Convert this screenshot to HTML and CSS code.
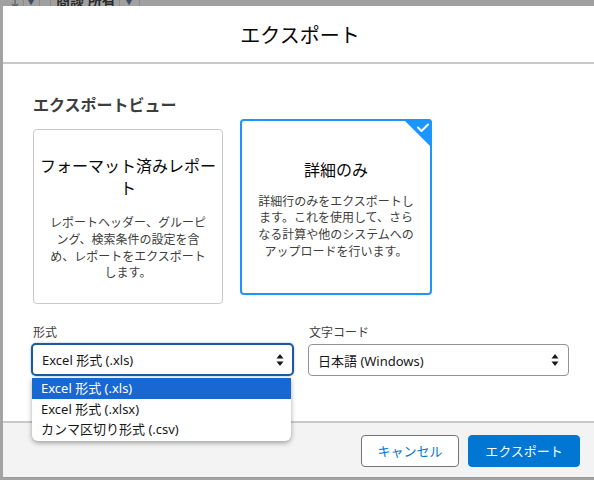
FILE: index.html
```html
<!DOCTYPE html>
<html lang="ja">
<head>
<meta charset="utf-8">
<title>エクスポート</title>
<link rel="stylesheet" href="styles.css">
</head>
<body>
<div class="page-strip">
  <div class="strip-row">
    <span class="strip-cell strip-a">↓</span>
    <span class="strip-cell strip-b">▼</span>
    <span class="strip-cell strip-c">商談 所有者</span>
    <span class="strip-cell strip-d">▼</span>
  </div>
</div>
<div class="modal">
  <header class="modal-header">
    <h2 class="modal-title">エクスポート</h2>
  </header>
  <section class="modal-body">
    <h3 class="section-title">エクスポートビュー</h3>
    <div class="cards">
      <div class="card card-formatted">
        <div class="card-title">フォーマット済みレポート</div>
        <div class="card-desc">レポートヘッダー、グルーピング、検索条件の設定を含め、レポートをエクスポートします。</div>
      </div>
      <div class="card card-selected">
        <svg class="card-check" width="29" height="29" viewBox="0 0 29 29">
          <polygon points="0,0 29,0 29,29" fill="#1b96ff"/>
          <polyline points="15,8.5 18.5,12 25,5.5" fill="none" stroke="#fff" stroke-width="2" stroke-linecap="round" stroke-linejoin="round"/>
        </svg>
        <div class="card-title">詳細のみ</div>
        <div class="card-desc">詳細行のみをエクスポートします。これを使用して、さらなる計算や他のシステムへのアップロードを行います。</div>
      </div>
    </div>
    <div class="form-row">
      <div class="field">
        <label class="field-label">形式</label>
        <div class="select select-focus">
          <span class="select-value">Excel 形式 (.xls)</span>
          <svg class="select-arrows" width="8" height="14" viewBox="0 0 8 14">
            <polygon points="4,1 7.5,5.5 0.5,5.5" fill="#181818"/>
            <polygon points="4,13 7.5,8.5 0.5,8.5" fill="#181818"/>
          </svg>
        </div>
        <ul class="dropdown">
          <li class="option option-active">Excel 形式 (.xls)</li>
          <li class="option">Excel 形式 (.xlsx)</li>
          <li class="option">カンマ区切り形式 (.csv)</li>
        </ul>
      </div>
      <div class="field">
        <label class="field-label">文字コード</label>
        <div class="select">
          <span class="select-value">日本語 (Windows)</span>
          <svg class="select-arrows" width="8" height="14" viewBox="0 0 8 14">
            <polygon points="4,1 7.5,5.5 0.5,5.5" fill="#181818"/>
            <polygon points="4,13 7.5,8.5 0.5,8.5" fill="#181818"/>
          </svg>
        </div>
      </div>
    </div>
  </section>
  <footer class="modal-footer">
    <button class="btn btn-neutral">キャンセル</button>
    <button class="btn btn-brand">エクスポート</button>
  </footer>
</div>
</body>
</html>
```

FILE: styles.css
```css
* { box-sizing: border-box; }

html, body {
  margin: 0;
  padding: 0;
}

body {
  width: 594px;
  height: 480px;
  overflow: hidden;
  background: #a3a3a3;
  font-family: "Noto Sans", "Noto Sans CJK JP", sans-serif;
  color: #181818;
}

.page-strip {
  height: 6px;
  overflow: hidden;
  background: #a0a0a0;
}

.strip-row {
  display: flex;
  margin-top: -9px;
  height: 20px;
  font-size: 14px;
  line-height: 20px;
  color: #2a2a2a;
}

.strip-cell {
  border-right: 1px solid #8a8a8a;
}

.strip-a { width: 24px; padding-left: 8px; color: #555; }
.strip-b { width: 16px; padding-left: 2px; color: #3f4d63; font-size: 10px; }
.strip-c { width: 70px; padding-left: 5px; margin-left: 10px; border-left: 1px solid #8a8a8a; font-weight: bold; }
.strip-d { width: 20px; padding-left: 4px; color: #3f4d63; font-size: 10px; }

.modal {
  margin-left: 3px;
  width: 594px;
  background: #fff;
}

.modal-header {
  height: 58px;
  display: flex;
  align-items: center;
  justify-content: center;
  border-bottom: 2px solid #c9c9c9;
  padding-top: 4px;
}

.modal-title {
  margin: 0;
  font-size: 20px;
  font-weight: normal;
  line-height: 24px;
  color: #080707;
}

.modal-body {
  height: 357px;
  padding: 30px 28px 0 29px;
}

.section-title {
  margin: 0;
  font-size: 16px;
  font-weight: bold;
  line-height: 20px;
  color: #3e3e3c;
  padding-left: 1px;
  padding-top: 1px;
}

.cards {
  display: flex;
  align-items: flex-start;
  gap: 17px;
  margin-top: 4px;
  height: 185px;
}

.card {
  position: relative;
  display: flex;
  flex-direction: column;
  justify-content: center;
  align-items: center;
  text-align: center;
  border-radius: 4px;
  padding: 4px 4px 0;
}

.card-formatted {
  width: 190px;
  height: 175px;
  margin-top: 10px;
  margin-left: 1px;
  border: 1px solid #c9c9c9;
}

.card-selected {
  width: 192px;
  height: 176px;
  border: 2px solid #1b96ff;
  padding: 5px 3px 0;
}

.card-check {
  position: absolute;
  top: -2px;
  right: -2px;
  border-top-right-radius: 4px;
}

.card-title {
  font-size: 16px;
  line-height: 22px;
  color: #080707;
}

.card-desc {
  width: 158px;
  font-size: 12px;
  line-height: 16.7px;
  color: #3e3e3c;
}

.card-formatted .card-desc {
  margin-top: 16px;
}

.card-selected .card-desc {
  margin-top: 13px;
}

.form-row {
  display: flex;
  gap: 15px;
  margin-top: 21px;
}

.field {
  position: relative;
  width: 261px;
}

.field-label {
  display: block;
  font-size: 12px;
  line-height: 16px;
  color: #3e3e3c;
  margin-bottom: 3px;
  padding-left: 1px;
}

.select {
  height: 32px;
  display: flex;
  align-items: center;
  justify-content: space-between;
  border: 1px solid #939393;
  border-radius: 4px;
  padding: 0 9px 0 9px;
  background: #fff;
  font-size: 13px;
  color: #181818;
}

.select-focus {
  border: 2px solid #1d5b9b;
  margin-left: -1px;
  margin-top: -1px;
  height: 33px;
  width: 263px;
  border-radius: 5px;
  padding: 0 8px 0 9px;
  box-shadow: 0 0 2px rgba(29, 91, 155, 0.5);
}

.select-arrows {
  flex: none;
}

.dropdown {
  position: absolute;
  top: 53px;
  left: 0;
  width: 259px;
  margin: 0;
  padding: 0 0 1px;
  list-style: none;
  background: #fff;
  border-radius: 0 0 6px 6px;
  box-shadow: 0 2px 5px rgba(0, 0, 0, 0.35);
  font-size: 13px;
  z-index: 2;
}

.option {
  height: 20.7px;
  line-height: 20px;
  padding-left: 9px;
  color: #181818;
}

.option-active {
  background: #1967d2;
  color: #fff;
}

.modal-footer {
  border-top: 2px solid #c9c9c9;
  border-bottom: 1px solid #9a9a9a;
  background: #f3f3f3;
  height: 57px;
  display: flex;
  justify-content: flex-end;
  align-items: flex-start;
  gap: 9px;
  padding: 12px 17px 0 0;
}

.btn {
  height: 32px;
  border-radius: 4px;
  font-family: inherit;
  font-size: 13px;
  line-height: 30px;
  padding: 0;
  cursor: pointer;
}

.btn-neutral {
  width: 98px;
  background: #fff;
  border: 1px solid #747474;
  color: #0176d3;
}

.btn-brand {
  width: 112px;
  background: #0176d3;
  border: 1px solid #0176d3;
  color: #fff;
}
```
